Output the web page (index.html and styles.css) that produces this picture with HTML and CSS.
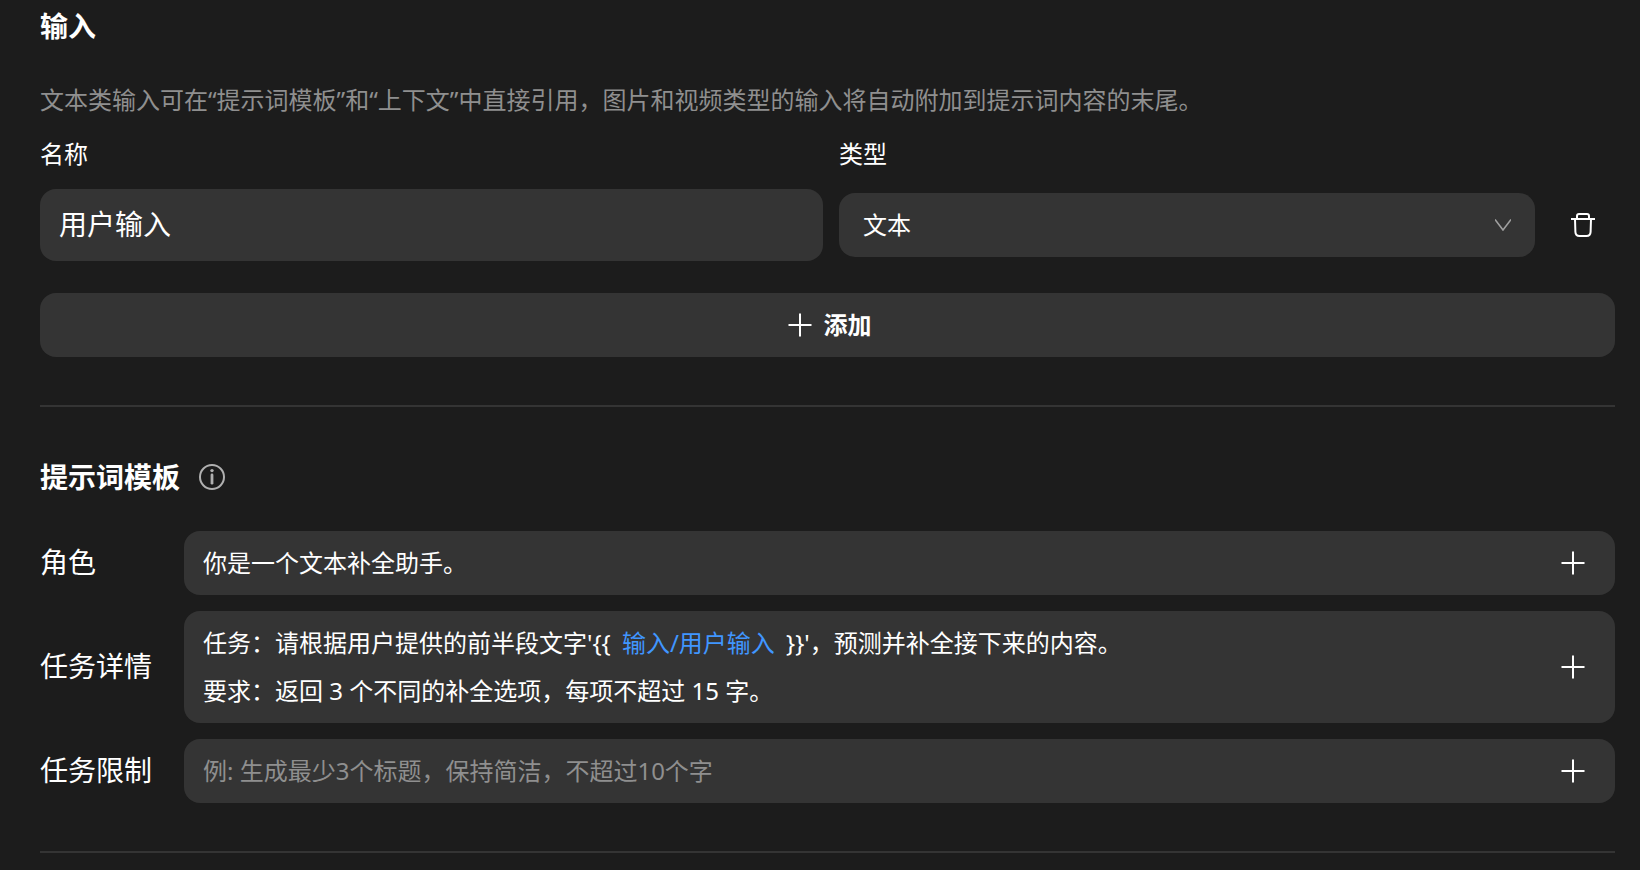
FILE: index.html
```html
<!DOCTYPE html>
<html lang="zh-CN">
<head>
<meta charset="utf-8">
<meta name="viewport" content="width=device-width, initial-scale=1">
<title>提示词模板</title>
<link rel="stylesheet" href="styles.css">
</head>
<body>
<svg class="sprite" aria-hidden="true">
  <symbol id="plus" viewBox="0 0 24 24"><path d="M12 0.5V23.5M0.5 12H23.5"/></symbol>
</svg>
<main class="page">
  <section class="section">
    <h2 class="title">输入</h2>
    <p class="hint">文本类输入可在“提示词模板”和“上下文”中直接引用，图片和视频类型的输入将自动附加到提示词内容的末尾。</p>
    <div class="fields">
      <label class="field-label" for="input-name">名称</label>
      <label class="field-label" for="input-type">类型</label>
      <input class="name-input" id="input-name" type="text" value="用户输入">
      <div class="select-wrap">
        <select class="type-select" id="input-type"><option>文本</option></select>
        <svg class="chevron" viewBox="0 0 16 12" aria-hidden="true"><path d="M0 0.5 8 11 16 0.5"/></svg>
      </div>
      <button class="icon-button delete" type="button" aria-label="删除">
        <svg class="icon" viewBox="0 0 24 24" aria-hidden="true"><path d="M0 6H24M6 6V3Q6 1 8 1H16Q18 1 18 3V6M4 6L4.4 19Q4.6 23 8.5 23H15.5Q19.4 23 19.6 19L20 6"/></svg>
      </button>
    </div>
    <button class="add-button" type="button">
      <svg class="icon" aria-hidden="true"><use href="#plus"/></svg>
      添加
    </button>
  </section>

  <section class="section">
    <header class="title-row">
      <h2 class="title">提示词模板</h2>
      <button class="info" type="button" aria-label="说明">
        <svg class="info-icon" viewBox="0 0 26 26" aria-hidden="true"><circle class="ring" cx="13" cy="13" r="12"/><circle class="dot" cx="13" cy="6.6" r="1.7"/><path class="stem" d="M13 11V19.2"/></svg>
      </button>
    </header>
    <div class="prompts">
      <label class="prompt-label" for="role">角色</label>
      <div class="prompt-box">
        <input class="prompt-input" id="role" type="text" value="你是一个文本补全助手。">
        <button class="icon-button" type="button" aria-label="插入变量到角色"><svg class="icon" aria-hidden="true"><use href="#plus"/></svg></button>
      </div>

      <span class="prompt-label" id="detail-label">任务详情</span>
      <div class="prompt-box">
        <div class="editor" role="textbox" aria-multiline="true" aria-labelledby="detail-label" contenteditable="true" spellcheck="false">
          <p class="line">任务：请根据用户提供的前半段文字'{{ <a class="variable" href="#input-name">输入/用户输入</a> }}'，预测并补全接下来的内容。</p>
          <p class="line">要求：返回 3 个不同的补全选项，每项不超过 15 字。</p>
        </div>
        <button class="icon-button" type="button" aria-label="插入变量到任务详情"><svg class="icon" aria-hidden="true"><use href="#plus"/></svg></button>
      </div>

      <label class="prompt-label" for="limit">任务限制</label>
      <div class="prompt-box">
        <input class="prompt-input" id="limit" type="text" placeholder="例: 生成最少3个标题，保持简洁，不超过10个字">
        <button class="icon-button" type="button" aria-label="插入变量到任务限制"><svg class="icon" aria-hidden="true"><use href="#plus"/></svg></button>
      </div>
    </div>
  </section>
</main>
</body>
</html>
```
FILE: styles.css
```css
:root {
  --bg: #1c1c1c;
  --surface: #343434;
  --text: #ffffff;
  --muted: #8f8f8f;
  --link: #4096ff;
}

* { box-sizing: border-box; }

body {
  margin: 0;
  background: var(--bg);
  color: var(--text);
  font: 24px/48px "Noto Sans", "Noto Sans CJK SC", sans-serif;
  text-spacing-trim: space-all;
}

h2, p { margin: 0; }

input, select, button {
  margin: 0;
  padding: 0;
  border: 0;
  background: none;
  color: inherit;
  font: inherit;
}

.sprite { position: absolute; width: 0; height: 0; }

.page { padding: 0 25px 0 40px; }

.section {
  border-bottom: 2px solid var(--surface);
  padding-bottom: 48px;
}

.title {
  font-size: 28px;
  line-height: 52px;
  font-weight: 700;
}

.hint {
  margin-top: 24px;
  color: var(--muted);
}

.fields {
  display: grid;
  grid-template-columns: 9fr 8fr 64px;
  column-gap: 16px;
  align-items: center;
  margin-top: 4px;
}

.field-label {
  line-height: 52px;
  padding-bottom: 9px;
}

.name-input {
  grid-column: 1;
  width: 100%;
  height: 72px;
  padding: 0 19px 4px;
  border-radius: 16px;
  background: var(--surface);
  font-size: 28px;
}

.select-wrap {
  display: grid;
  align-items: center;
  border-radius: 16px;
  background: var(--surface);
}

.type-select {
  grid-area: 1 / 1;
  width: 100%;
  height: 64px;
  padding: 0 24px;
  appearance: none;
}

.type-select option { background: var(--surface); }

.chevron {
  grid-area: 1 / 1;
  justify-self: end;
  width: 16px;
  height: 12px;
  margin-right: 24px;
  fill: none;
  stroke: #a0a0a0;
  stroke-width: 1.6;
  pointer-events: none;
}

.icon-button {
  display: flex;
  flex: none;
  padding: 0;
}

.delete { justify-self: center; }

.icon {
  width: 24px;
  height: 24px;
  fill: none;
  stroke: var(--text);
  stroke-width: 2;
}

.add-button {
  display: flex;
  justify-content: center;
  align-items: center;
  gap: 12px;
  width: 100%;
  height: 64px;
  margin-top: 32px;
  padding-left: 4px;
  border-radius: 16px;
  background: var(--surface);
  font-weight: 700;
}

.title-row {
  display: flex;
  align-items: center;
  gap: 19px;
  margin-top: 44px;
}

.info { display: flex; }

.info-icon { width: 26px; height: 26px; }
.ring { fill: none; stroke: #b0b0b0; stroke-width: 2; }
.dot { fill: #b0b0b0; }
.stem { stroke: #b0b0b0; stroke-width: 2.8; stroke-linecap: round; }

.prompts {
  display: grid;
  grid-template-columns: 128px 1fr;
  gap: 16px;
  align-items: center;
  margin-top: 28px;
}

.prompt-label {
  padding-bottom: 2px;
  font-size: 28px;
}

.prompt-box {
  display: flex;
  align-items: center;
  gap: 24px;
  padding: 8px 30px 8px 19px;
  border-radius: 16px;
  background: var(--surface);
}

.prompt-input {
  flex: 1;
  min-width: 0;
  height: 48px;
}

.prompt-input::placeholder { color: var(--muted); opacity: 1; }

.editor { flex: 1; outline: 0; }

.variable {
  margin: 0 5px;
  color: var(--link);
  text-decoration: none;
}
```
